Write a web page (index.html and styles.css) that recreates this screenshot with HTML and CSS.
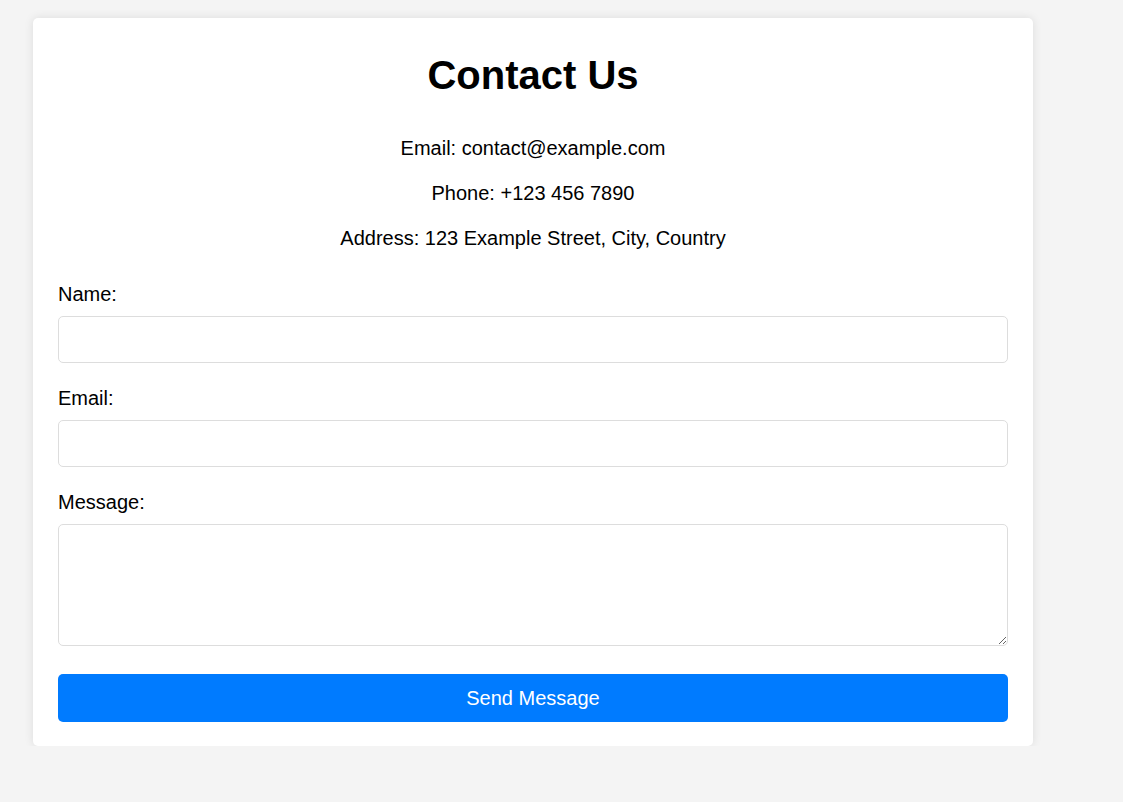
FILE: index.html
```html
<!DOCTYPE html>
<html lang="en">
<head>
<meta charset="UTF-8">
<title>Contact Us</title>
<link rel="stylesheet" href="styles.css">
</head>
<body>
  <div class="container">
    <h1 class="title">Contact Us</h1>
    <div class="info">
      <p>Email: contact@example.com</p>
      <p>Phone: +123 456 7890</p>
      <p>Address: 123 Example Street, City, Country</p>
    </div>
    <form class="form">
      <div class="form-group">
        <label for="name">Name:</label>
        <input type="text" id="name" class="field">
      </div>
      <div class="form-group">
        <label for="email">Email:</label>
        <input type="email" id="email" class="field">
      </div>
      <div class="form-group">
        <label for="message">Message:</label>
        <textarea id="message" class="field textarea"></textarea>
      </div>
      <button type="submit" class="btn">Send Message</button>
    </form>
  </div>
</body>
</html>
```

FILE: styles.css
```css
* {
  box-sizing: border-box;
}

body {
  margin: 0;
  padding: 18px 0 0 33px;
  background: #f4f4f4;
  font-family: Arial, "Liberation Sans", sans-serif;
  font-size: 20px;
  color: #000;
}

.container {
  width: 1000px;
  background: #fff;
  border-radius: 5px;
  box-shadow: 0 0 10px rgba(0, 0, 0, 0.1);
  padding: 25px 25px 24px;
}

.title {
  font-size: 40px;
  font-weight: bold;
  text-align: center;
  line-height: 46px;
  margin: 9px 0 38px;
}

.info {
  text-align: center;
  margin-bottom: 31px;
}

.info p {
  margin: 0 0 20px;
  line-height: 25px;
}

.info p:last-child {
  margin-bottom: 0;
}

.form-group {
  margin-bottom: 23px;
}

.form-group label {
  display: block;
  line-height: 25px;
  margin-bottom: 9px;
}

.field {
  display: block;
  width: 100%;
  height: 47px;
  padding: 0 12px;
  border: 1px solid #ddd;
  border-radius: 5px;
  font-family: inherit;
  font-size: 16px;
  background: #fff;
  margin: 0;
}

.textarea {
  height: 122px;
  padding: 12px;
  resize: vertical;
}

.btn {
  display: block;
  width: 100%;
  height: 48px;
  margin-top: 28px;
  border: none;
  border-radius: 5px;
  background: #007bff;
  color: #fff;
  font-family: inherit;
  font-size: 20px;
  cursor: pointer;
}
```
